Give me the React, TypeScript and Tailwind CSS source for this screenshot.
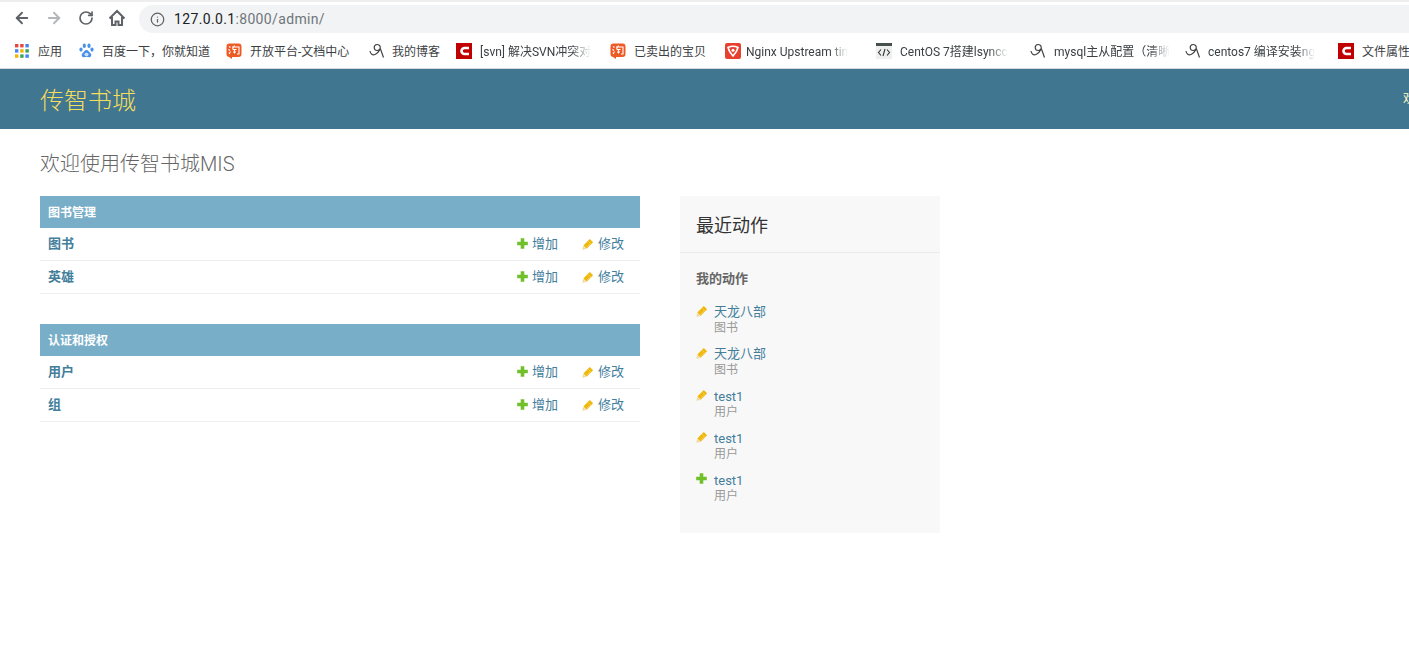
import { ArrowLeft, ArrowRight, Info, RotateCw } from "lucide-react";
import type { ReactNode } from "react";

const Taobao = () => (
  <svg width="16" height="16" viewBox="0 0 16 16" className="shrink-0">
    <rect x="0.5" y="0.5" width="15" height="13.5" rx="3" fill="#ee5a24" />
    <path d="M3 14l3-1v3z" fill="#ee5a24" />
    <path d="M3 3.500l1.500 1M2.500 6.500l1.500 1M3 11l1.500-2.500M6 4h7v7h-2M8.500 2.500L6.500 6M6.500 6.500h4M7 9h3M8.500 6.500v4" stroke="#fff" strokeWidth="1.100" fill="none" />
  </svg>
);

const Csdn = () => (
  <svg width="16" height="16" viewBox="0 0 16 16" className="shrink-0">
    <rect width="16" height="16" fill="#c00000" />
    <path d="M13 5H8.500a3 3 0 0 0 0 6H13" stroke="#fff" strokeWidth="2.600" fill="none" />
  </svg>
);

const Blog = () => (
  <svg width="16" height="16" viewBox="0 0 16 16" className="shrink-0">
    <path d="M1 8c.5 3 2.500 4.500 5 3.500s4-3 5.500-6.500M8 1.500a3 3 0 1 1 .5 6 3 3 0 0 1-.5-6M11.500 6l3 8.500" stroke="#444" strokeWidth="1.200" fill="none" />
  </svg>
);

const Apps = () => (
  <svg width="14" height="14" viewBox="0 0 14 14" className="shrink-0">
    {[
      ["#e8453c", "#e8453c", "#4285f4"],
      ["#4285f4", "#f4b400", "#34a853"],
      ["#f4b400", "#34a853", "#4285f4"],
    ].map((row, y) =>
      row.map((c, x) => <rect key={`${x}-${y}`} x={x * 5.2} y={y * 5.2} width="3.400" height="3.400" fill={c} />),
    )}
  </svg>
);

const Baidu = () => (
  <svg width="15" height="16" viewBox="0 0 15 16" className="shrink-0">
    <g fill="#4a90e8">
      <ellipse cx="5.300" cy="2.800" rx="1.600" ry="2.200" />
      <ellipse cx="10" cy="2.800" rx="1.600" ry="2.200" />
      <ellipse cx="2" cy="6.600" rx="1.600" ry="2.100" />
      <ellipse cx="13" cy="6.600" rx="1.600" ry="2.100" />
      <path d="M7.500 7c2 0 2.500 2 4 3.200 1.500 1.500.8 4-1.500 4-1 0-1.500-.4-2.500-.4s-1.500.4-2.500.4c-2.300 0-3-2.500-1.500-4C5 9 5.500 7 7.500 7z" />
    </g>
    <ellipse cx="7.500" cy="11.500" rx="2" ry="1.800" fill="#cfe2fa" />
  </svg>
);

const Shield = () => (
  <svg width="16" height="16" viewBox="0 0 16 16" className="shrink-0">
    <rect width="16" height="16" rx="2" fill="#e8402f" />
    <path d="M3 4.500c3-1.500 7-1.500 10 0-.8 3.500-2.500 6-5 8.500-2.500-2.500-4.200-5-5-8.500z" fill="none" stroke="#fff" strokeWidth="1.600" />
    <circle cx="8" cy="7.200" r="1.500" fill="#fff" />
  </svg>
);

const Code = () => (
  <svg width="16" height="16" viewBox="0 0 16 16" className="shrink-0">
    <rect width="16" height="16" fill="#eef0f0" />
    <rect width="16" height="3" fill="#46504f" />
    <path d="M5 6.500L2.500 9.500 5 12.500M11 6.500l2.500 3-2.500 3M9 6l-2 7" stroke="#333" strokeWidth="1.100" fill="none" />
  </svg>
);

const HomeIcon = () => (
  <svg width="18" height="18" viewBox="0 0 18 18" className="ml-[14px] shrink-0">
    <path d="M1.500 9.500L9 2l7.500 7.500M4 8v8h3.500v-3.500h3V16H14V8" fill="none" stroke="#5f6368" strokeWidth="2" />
  </svg>
);

const bookmarks: { icon: ReactNode; text: string; width: string; gap: string; fade?: boolean }[] = [
  { icon: <Apps />, text: "应用", width: "w-[64px]", gap: "gap-[9px]" },
  { icon: <Baidu />, text: "百度一下，你就知道", width: "w-[147px]", gap: "gap-[8px]" },
  { icon: <Taobao />, text: "开放平台-文档中心", width: "w-[143px]", gap: "gap-[8px]" },
  { icon: <Blog />, text: "我的博客", width: "w-[87px]", gap: "gap-[7px]" },
  { icon: <Csdn />, text: "[svn] 解决SVN冲突对", width: "w-[154px]", gap: "gap-[8px]", fade: true },
  { icon: <Taobao />, text: "已卖出的宝贝", width: "w-[115px]", gap: "gap-[8px]" },
  { icon: <Shield />, text: "Nginx Upstream tin", width: "w-[151px]", gap: "gap-[5px]", fade: true },
  { icon: <Code />, text: "CentOS 7搭建lsyncc", width: "w-[154px]", gap: "gap-[8px]", fade: true },
  { icon: <Blog />, text: "mysql主从配置（清晰", width: "w-[155px]", gap: "gap-[8px]", fade: true },
  { icon: <Blog />, text: "centos7 编译安装ng", width: "w-[153px]", gap: "gap-[7px]", fade: true },
  { icon: <Csdn />, text: "文件属性", width: "w-[90px]", gap: "gap-[8px]" },
];

const PlusIcon = () => (
  <svg width="11" height="11" viewBox="0 0 11 11" className="shrink-0 -mt-[1px]">
    <path d="M3.700.2h3.600v3.500h3.500v3.600H7.300v3.500H3.700V7.300H.2V3.700h3.500z" fill="#70bf2b" />
  </svg>
);

const PencilIcon = () => (
  <svg width="12" height="12" viewBox="0 0 12 12" className="shrink-0 -mt-[1px]">
    <path d="M7.800.9l3.300 3.300-6.500 6.500-3.300-3.300z" fill="#efb80b" />
    <path d="M1 8l3 3-3.500.8z" fill="#ecd79a" />
    <path d="M6.500 3.500l2 2-4 4" fill="none" stroke="#f7d774" strokeWidth="0.700" />
  </svg>
);

const modules = [
  { title: "图书管理", rows: ["图书", "英雄"] },
  { title: "认证和授权", rows: ["用户", "组"] },
];

const actions = [
  { name: "天龙八部", type: "图书", add: false, latin: false },
  { name: "天龙八部", type: "图书", add: false, latin: false },
  { name: "test1", type: "用户", add: false, latin: true },
  { name: "test1", type: "用户", add: false, latin: true },
  { name: "test1", type: "用户", add: true, latin: true },
];

const App = () => {
  return (
    <div className="w-[1409px] h-[648px] overflow-hidden bg-white font-['Roboto','Noto_Sans_CJK_SC',sans-serif]">
      {/* Browser bar */}
      <div className="h-[33px] border-t-2 border-[#eeeeee] flex items-center pl-[13px]">
        <ArrowLeft size={18} strokeWidth={2.5} className="text-[#5f6368]" />
        <ArrowRight size={18} strokeWidth={2.5} className="text-[#b4b7ba] ml-[14px]" />
        <RotateCw size={16} strokeWidth={2.6} className="text-[#5f6368] ml-[15px]" />
        <HomeIcon />
        <div className="ml-[13px] flex-1 h-[28px] mt-[3px] bg-[#f1f3f4] rounded-l-[14px] flex items-center pl-[11px]">
          <Info size={15} strokeWidth={2} className="text-[#5f6368]" />
          <span className="ml-[9px] text-[14px] text-[#202124] tracking-[0.35px]">
            127.0.0.1<span className="text-[#70757a]">:8000/admin/</span>
          </span>
        </div>
      </div>
      <div className="h-[36px] flex items-center pl-[15px] border-b border-[#d5d9dc]">
        {bookmarks.map((b, i) => (
          <div key={i} className={`${b.width} ${b.gap} shrink-0 flex items-center`}>
            {b.icon}
            <span
              className={`pt-[2px] text-[12px] text-[#3c4043] whitespace-nowrap ${
                b.fade ? "[mask-image:linear-gradient(to_right,#000_82%,transparent)]" : ""
              }`}
            >
              {b.text}
            </span>
          </div>
        ))}
      </div>

      {/* Site header */}
      <div className="h-[60px] bg-[#417690] flex items-center justify-between pl-[40px]">
        <h1 className="pt-[3px] text-[24px] font-light text-[#f5dd5d]">传智书城</h1>
        <span className="text-[12px] text-[#ffffcc] w-[6px] overflow-hidden">欢</span>
      </div>

      {/* Content */}
      <div className="pl-[40px] pt-[21px]">
        <h2 className="text-[20px] leading-[28px] font-light text-[#666666]">欢迎使用传智书城MIS</h2>
        <div className="flex mt-[18px] gap-[40px] items-start">
          <div className="w-[600px] flex flex-col gap-[30px]">
            {modules.map((m) => (
              <div key={m.title}>
                <div className="h-[32px] pt-[2px] bg-[#79aec8] flex items-center px-[8px] text-[12px] font-bold text-white">
                  {m.title}
                </div>
                {m.rows.map((row) => (
                  <div key={row} className="h-[33px] border-b border-[#eeeeee] flex items-center pl-[8px] pr-[16px] text-[13px]">
                    <span className="font-bold text-[#447e9b] flex-1">{row}</span>
                    <span className="flex items-center gap-[4px] text-[#447e9b]">
                      <PlusIcon />
                      增加
                    </span>
                    <span className="flex items-center gap-[4px] text-[#447e9b] ml-[24px]">
                      <PencilIcon />
                      修改
                    </span>
                  </div>
                ))}
              </div>
            ))}
          </div>

          <div className="w-[260px] h-[337px] bg-[#f8f8f8]">
            <h3 className="h-[57px] pt-[2px] border-b border-[#eaeaea] flex items-center pl-[16px] text-[18px] text-[#333333] font-normal">
              最近动作
            </h3>
            <div className="px-[16px] pt-[17px]">
              <h4 className="text-[13px] leading-[18px] font-bold text-[#666666]">我的动作</h4>
              <ul className="mt-[16px] flex flex-col gap-[10px]">
                {actions.map((a, i) => (
                  <li key={i} className="flex">
                    <span className="w-[18px] pt-[2px]">{a.add ? <PlusIcon /> : <PencilIcon />}</span>
                    <div>
                      <div className={`text-[13px] text-[#447e9b] ${a.latin ? "leading-[18px] -mb-[2px]" : "leading-[16px]"}`}>
                        {a.name}
                      </div>
                      <div className="text-[12px] leading-[16px] text-[#999999]">{a.type}</div>
                    </div>
                  </li>
                ))}
              </ul>
            </div>
          </div>
        </div>
      </div>
    </div>
  );
};

export default App;
